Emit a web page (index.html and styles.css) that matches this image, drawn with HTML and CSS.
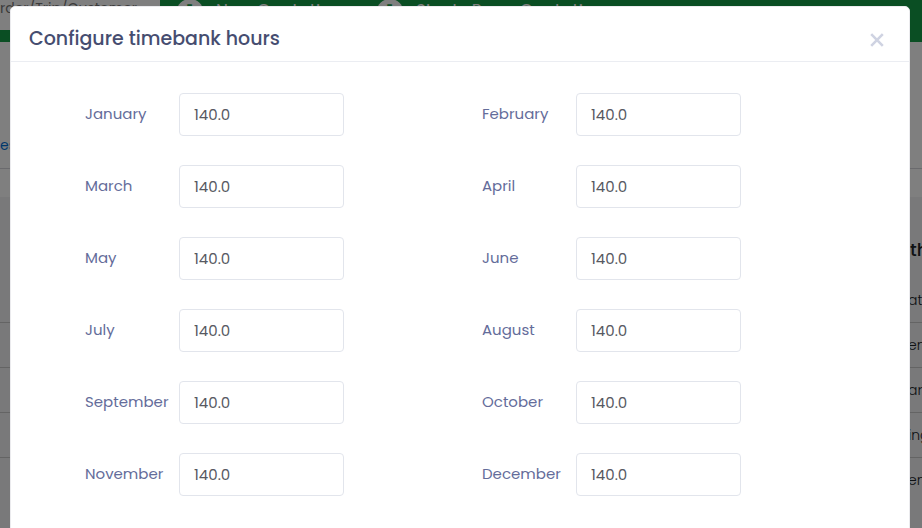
FILE: index.html
```html
<!DOCTYPE html>
<html lang="en">
<head>
  <meta charset="UTF-8">
  <meta name="viewport" content="width=device-width, initial-scale=1.0">
  <title>Configure timebank hours</title>
  <link rel="stylesheet" href="styles.css">
</head>
<body>
  <div class="page">
    <header class="topbar">
      <div class="search">rder/Trip/Customer</div>
      <a class="toplink" href="#"><span class="badge">1</span>New Quotation</a>
      <a class="toplink" href="#"><span class="badge">1</span>Single Page Quotation</a>
    </header>
    <div class="subbar"><a href="#">es</a></div>
    <div class="strip"></div>
    <div class="list">
      <h3>th</h3>
      <p>ati</p>
      <p>en</p>
      <p>ar</p>
      <p>ing</p>
      <p>en</p>
    </div>
  </div>

  <div class="overlay">
    <div class="modal" role="dialog" aria-labelledby="title">
      <div class="modal-header">
        <h1 id="title">Configure timebank hours</h1>
        <button class="close" type="button" aria-label="Close">
          <svg width="14" height="14" viewBox="0 0 14 14"><path d="M1.2 1.2l11.6 11.6M12.8 1.2l-11.6 11.6" fill="none" stroke="currentColor" stroke-width="2.6"/></svg>
        </button>
      </div>
      <form class="months">
        <div class="field"><label for="jan">January</label><input type="text" id="jan" value="140.0"></div>
        <div class="field"><label for="feb">February</label><input type="text" id="feb" value="140.0"></div>
        <div class="field"><label for="mar">March</label><input type="text" id="mar" value="140.0"></div>
        <div class="field"><label for="apr">April</label><input type="text" id="apr" value="140.0"></div>
        <div class="field"><label for="may">May</label><input type="text" id="may" value="140.0"></div>
        <div class="field"><label for="jun">June</label><input type="text" id="jun" value="140.0"></div>
        <div class="field"><label for="jul">July</label><input type="text" id="jul" value="140.0"></div>
        <div class="field"><label for="aug">August</label><input type="text" id="aug" value="140.0"></div>
        <div class="field"><label for="sep">September</label><input type="text" id="sep" value="140.0"></div>
        <div class="field"><label for="oct">October</label><input type="text" id="oct" value="140.0"></div>
        <div class="field"><label for="nov">November</label><input type="text" id="nov" value="140.0"></div>
        <div class="field"><label for="dec">December</label><input type="text" id="dec" value="140.0"></div>
      </form>
    </div>
  </div>
</body>
</html>
```
FILE: styles.css
```css
* {
  box-sizing: border-box;
}
body {
  margin: 0;
  height: 100vh;
  overflow: hidden;
  font-family: Poppins, Inter, sans-serif;
  font-size: 15px;
  background: #f2f2f4;
}

/* page behind the dialog */
.page {
  height: 100vh;
  overflow: hidden;
  color: #212529;
}
.topbar {
  display: flex;
  align-items: flex-start;
  height: 42px;
  background: #149c46;
  white-space: nowrap;
}
.search {
  width: 160px;
  height: 30px;
  line-height: 16px;
  background: #fff;
  color: #777;
  font-size: 14px;
}
.toplink {
  display: flex;
  align-items: center;
  gap: 13px;
  height: 21px;
  margin-left: 17px;
  margin-right: 18px;
  color: #fff;
  font-size: 17px;
  text-decoration: none;
}
.badge {
  width: 26px;
  height: 24px;
  line-height: 24px;
  border-radius: 50%;
  background: #fff;
  color: #149c46;
  font-weight: 700;
  text-align: center;
}
.subbar {
  height: 127px;
  padding-top: 94px;
  border-bottom: 1px solid #d5d5da;
  line-height: 18px;
  background: #fff;
}
.subbar a {
  color: #0070d8;
  font-size: 14px;
  text-decoration: none;
}
.strip {
  height: 28px;
  background: #fff;
}
.list {
  padding-top: 40px;
}
.list h3 {
  height: 41px;
  margin: 0;
  padding-left: 910px;
  font-size: 18px;
  font-weight: 500;
  line-height: 26px;
}
.list p {
  height: 45px;
  margin: 0;
  padding-left: 908px;
  border-bottom: 1px solid #c8c8c8;
  font-size: 14px;
  font-weight: 300;
  line-height: 44px;
}
.list p:last-child {
  border-bottom: none;
}

.overlay {
  position: fixed;
  inset: 0;
  padding: 6px 12px 0 10px;
  background: rgba(0, 0, 0, 0.5);
}
.modal {
  min-height: 100%;
  border: 1px solid #ebebee;
  border-radius: 5px 5px 0 0;
  background: #fff;
}
.modal-header {
  display: flex;
  align-items: center;
  justify-content: space-between;
  height: 55px;
  padding: 8px 25px 0 18px;
  border-bottom: 1px solid #ebedf2;
}
.modal-header h1 {
  margin: 0;
  color: #464d70;
  font-size: 19px;
  font-weight: 500;
}
.close {
  display: flex;
  padding: 4px 0 0;
  border: none;
  background: none;
  color: #cfd3e2;
  cursor: pointer;
}
.months {
  display: grid;
  grid-template-columns: 1fr 1fr;
  row-gap: 29px;
  padding: 31px 30px 32px 74px;
}
.field {
  display: flex;
  align-items: center;
}
.field label {
  width: 94px;
  padding-bottom: 2px;
  color: #646c9a;
}
.field input {
  width: 165px;
  height: 43px;
  padding: 0 14px 1px;
  border: 1px solid #e2e5ec;
  border-radius: 4px;
  background: #fff;
  color: #575962;
  font: inherit;
}
```
